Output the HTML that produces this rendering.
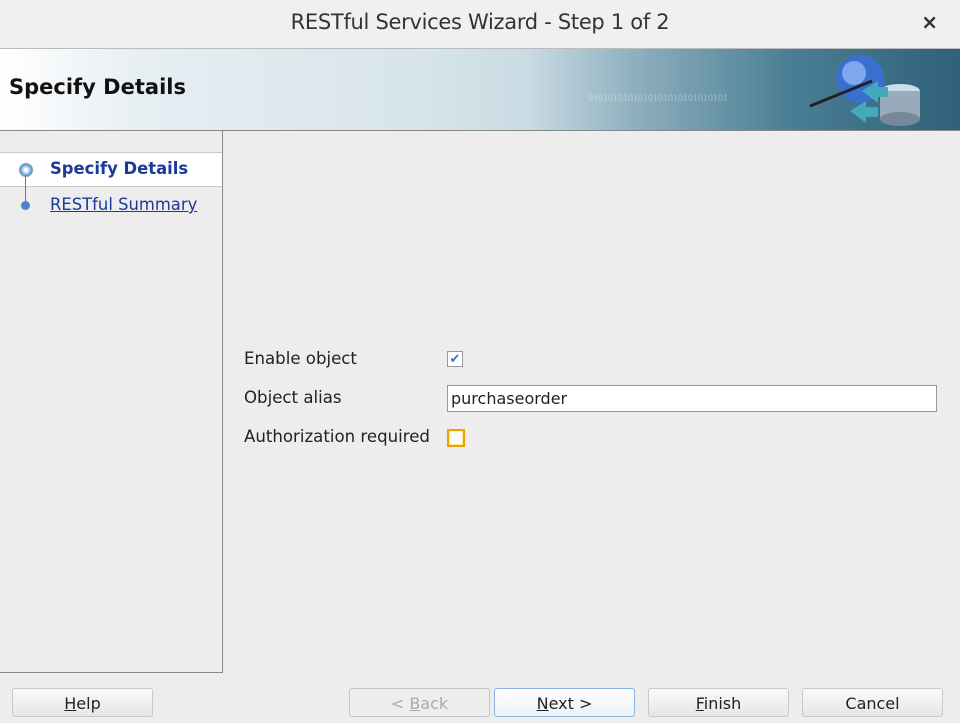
<!DOCTYPE html>
<html><head><style>
body{margin:0;width:960px;height:723px;background:#ededed;font-family:"DejaVu Sans","Liberation Sans",sans-serif;position:relative;overflow:hidden;font-size:16.6px;color:#222}
.abs{position:absolute}
.title{left:0;top:0;width:960px;height:48px;background:#f0f0f0;border-bottom:1px solid #bbb;text-align:center;line-height:44px;font-size:21px;color:#333;letter-spacing:-0.3px}
.banner{left:0;top:49px;width:960px;height:81px;border-bottom:1px solid #888;background:linear-gradient(90deg,#fff 0%,#e6eef2 15%,#d6e4ea 45%,#c9dbe3 55%,#8fb0bf 66%,#4b7f95 82%,#2f6178 100%)}
.left{left:-1px;top:130px;width:222px;height:541px;border:1px solid #888;background:#ededed}
.btn{top:688px;height:29px;border:1px solid #c8c8c8;border-radius:3px;background:linear-gradient(#fafafa,#e6e6e6);text-align:center;line-height:29px;font-size:16px;color:#222;box-sizing:border-box}
u{text-decoration:underline}
</style></head><body>
<div class="abs title">RESTful Services Wizard - Step 1 of 2</div>
<div class="abs" style="right:22px;top:10px;font-size:20px;font-weight:bold;color:#333">×</div>
<div class="abs banner">
<div class="abs" style="left:9px;top:26px;font-size:21px;font-weight:bold;color:#111">Specify Details</div>
<div class="abs" style="left:588px;top:44px;font-size:10px;color:rgba(255,255,255,0.35);font-family:'Liberation Serif',serif">0101010101010101010101010101</div>
<svg class="abs" style="left:800px;top:2px" width="130" height="78">
<circle cx="60" cy="28" r="24" fill="#3a6fd0"/><circle cx="54" cy="22" r="12" fill="#7fa6ee"/>
<line x1="10" y1="55" x2="72" y2="30" stroke="#222" stroke-width="3"/>
<ellipse cx="100" cy="40" rx="20" ry="7" fill="#cde"/><rect x="80" y="40" width="40" height="28" fill="#9ab"/><ellipse cx="100" cy="68" rx="20" ry="7" fill="#789"/>
<path d="M62 40 L78 30 L78 36 L88 36 L88 46 L78 46 L78 52Z" fill="#4ab"/>
<path d="M50 60 L66 50 L66 56 L78 56 L78 66 L66 66 L66 72Z" fill="#4ab"/>
</svg>
</div>
<div class="abs left">
<div class="abs" style="left:0;top:21px;width:222px;height:33px;background:#fff;border-top:1px solid #ccc;border-bottom:1px solid #ccc"></div>
<div class="abs" style="left:25px;top:44px;width:1px;height:28px;background:#4a7cc0"></div>
<div class="abs" style="left:19px;top:32px;width:12px;height:12px;border-radius:50%;background:radial-gradient(#fff 20%,#6aa0e0 60%,#3a6fc0);border:1px solid #7aa"></div>
<div class="abs" style="left:21px;top:70px;width:9px;height:9px;border-radius:50%;background:#4a86d0"></div>
<div class="abs" style="left:50px;top:28px;font-weight:bold;color:#1a3a9a;font-size:16.4px">Specify Details</div>
<div class="abs" style="left:50px;top:64px;color:#1a3a9a;text-decoration:underline;font-size:16.4px">RESTful Summary</div>
</div>
<div class="abs" style="left:244px;top:349px">Enable object</div>
<div class="abs" style="left:244px;top:388px">Object alias</div>
<div class="abs" style="left:244px;top:427px">Authorization required</div>
<div class="abs" style="left:447px;top:351px;width:16px;height:16px;border:1px solid #999;background:#fff;box-sizing:border-box;color:#3a6fd0;font-size:13px;line-height:15px;text-align:center">✔</div>
<div class="abs" style="left:447px;top:385px;width:490px;height:27px;border:1px solid #999;background:#fff;box-sizing:border-box;padding-left:3px;line-height:25px;font-size:16px">purchaseorder</div>
<div class="abs" style="left:447px;top:429px;width:18px;height:18px;border:2px solid #f0a000;background:#fff;box-sizing:border-box;box-shadow:inset 0 0 2px #fc0"></div>
<div class="abs btn" style="left:12px;width:141px"><u>H</u>elp</div>
<div class="abs btn" style="left:349px;width:141px;color:#aaa;background:#eee">&lt; <u>B</u>ack</div>
<div class="abs btn" style="left:494px;width:141px;border-color:#8ab4e0;background:linear-gradient(#fdfdfd,#eef2f6)"><u>N</u>ext &gt;</div>
<div class="abs btn" style="left:648px;width:141px"><u>F</u>inish</div>
<div class="abs btn" style="left:802px;width:141px">Cancel</div>
</body></html>
